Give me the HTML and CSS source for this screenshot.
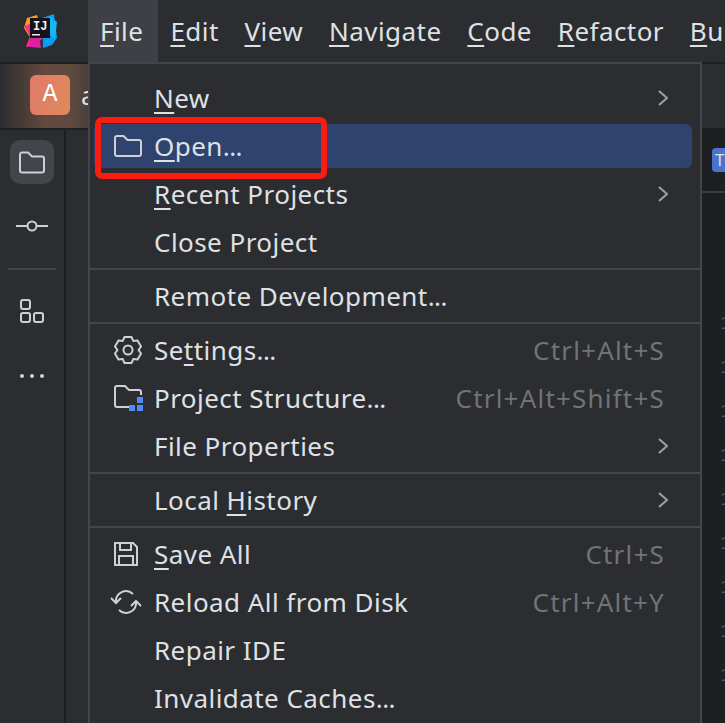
FILE: index.html
```html
<!DOCTYPE html>
<html lang="en">
<head>
<meta charset="utf-8">
<title>File menu</title>
<link rel="stylesheet" href="styles.css">
</head>
<body>
<div class="window">
  <header class="titlebar">
    <div class="logo-box">
      <svg class="logo" width="40" height="40" viewBox="0 0 40 40">
        <polygon points="6,4 16,1 19,12 8,22 3,14" fill="#ff9a1f"/>
        <polygon points="3,12 14,8 22,24 13,32 5,33 9,22" fill="#fd2b8d"/>
        <polygon points="21,4 33,0 36,24 31,31 22,34" fill="#0a9cf0"/>
        <polygon points="28,2 36,8 34,25 28,20" fill="#16b7f5"/>
        <polygon points="8,23 18,20 20,34 9,33" fill="#dd1fa0"/>
        <rect x="9" y="4" width="20" height="20" fill="#16121c"/>
        <text class="logo-text" x="12" y="16">IJ</text>
        <rect x="11" y="20" width="8" height="1.5" fill="#e8e8e8"/>
      </svg>
    </div>
    <nav class="menubar">
      <span class="menubar-item is-open"><u>F</u>ile</span>
      <span class="menubar-item"><u>E</u>dit</span>
      <span class="menubar-item"><u>V</u>iew</span>
      <span class="menubar-item"><u>N</u>avigate</span>
      <span class="menubar-item"><u>C</u>ode</span>
      <span class="menubar-item"><u>R</u>efactor</span>
      <span class="menubar-item"><u>B</u>uild</span>
    </nav>
  </header>

  <div class="toolbar">
    <span class="avatar">A</span>
    <span class="project-name">a</span>
  </div>

  <div class="workspace">
    <aside class="stripe">
      <span class="stripe-btn is-active">
        <svg width="32" height="28" viewBox="0 0 32 28" fill="none" stroke="#ced0d6" stroke-width="2"><path d="M4 6.500a2 2 0 0 1 2-2h6l4 4h10a2 2 0 0 1 2 2v12a2 2 0 0 1-2 2H6a2 2 0 0 1-2-2z"/></svg>
      </span>
      <span class="stripe-btn">
        <svg width="34" height="16" viewBox="0 0 34 16" fill="none" stroke="#ced0d6" stroke-width="2"><circle cx="17" cy="8" r="4.500"/><path d="M1 8h11M22 8h11"/></svg>
      </span>
      <span class="stripe-sep"></span>
      <span class="stripe-btn">
        <svg width="28" height="28" viewBox="0 0 28 28" fill="none" stroke="#ced0d6" stroke-width="2"><rect x="3" y="2" width="9" height="9" rx="2"/><rect x="3" y="15" width="9" height="9" rx="2"/><rect x="16" y="15" width="9" height="9" rx="2"/></svg>
      </span>
      <span class="stripe-btn">
        <svg width="28" height="6" viewBox="0 0 28 6" fill="#ced0d6"><circle cx="4" cy="3" r="2"/><circle cx="14" cy="3" r="2"/><circle cx="24" cy="3" r="2"/></svg>
      </span>
    </aside>
    <div class="side-panel"></div>
    <main class="editor">
      <div class="tabs"><span class="badge">T</span></div>
      <div class="gutter">
        <span>1</span><span>1</span><span>1</span><span>1</span><span>1</span><span>1</span><span>1</span><span>1</span><span>1</span>
      </div>
    </main>
  </div>

  <div class="menu">
    <div class="row"><span class="label"><u>N</u>ew</span><svg class="chev" width="12" height="18" viewBox="0 0 12 18"><path d="M2 2l8 7-8 7"/></svg></div>
    <div class="row is-selected">
      <svg class="icon" width="30" height="26" viewBox="0 0 30 26" fill="none" stroke="#ced0d6" stroke-width="2"><path d="M2 5a2 2 0 0 1 2-2h6.500l4 4H26a2 2 0 0 1 2 2v12a2 2 0 0 1-2 2H4a2 2 0 0 1-2-2z"/></svg>
      <span class="label"><u>O</u>pen<span class="dots">...</span></span>
    </div>
    <div class="row"><span class="label"><u>R</u>ecent Projects</span><svg class="chev" width="12" height="18" viewBox="0 0 12 18"><path d="M2 2l8 7-8 7"/></svg></div>
    <div class="row"><span class="label">Close Project</span></div>
    <div class="sep"></div>
    <div class="row"><span class="label">Remote Development<span class="dots">...</span></span></div>
    <div class="sep"></div>
    <div class="row">
      <svg class="icon" width="30" height="30" viewBox="0 0 30 30" fill="none" stroke="#ced0d6" stroke-width="2" stroke-linejoin="round"><path d="M11.500 2h7l1.750 3.900 4.300-.45 3.500 6.050-2.550 3.500 2.550 3.500-3.500 6.050-4.300-.45L18.500 28h-7l-1.750-3.900-4.300.45-3.500-6.050L4.500 15l-2.550-3.500 3.500-6.050 4.300.45z"/><circle cx="15" cy="15" r="4.500"/></svg>
      <span class="label">Se<u>t</u>tings<span class="dots">...</span></span><span class="shortcut">Ctrl+Alt+S</span>
    </div>
    <div class="row">
      <svg class="icon" width="32" height="28" viewBox="0 0 32 28"><path d="M17 23H4a2 2 0 0 1-2-2V4a2 2 0 0 1 2-2h8l4 4h10a2 2 0 0 1 2 2v3" fill="none" stroke="#ced0d6" stroke-width="2"/><rect x="24" y="13" width="6" height="6" fill="#548af7"/><rect x="16" y="21" width="6" height="6" fill="#548af7"/><rect x="24" y="21" width="6" height="6" fill="#548af7"/></svg>
      <span class="label">Project Structure<span class="dots">...</span></span><span class="shortcut">Ctrl+Alt+Shift+S</span>
    </div>
    <div class="row"><span class="label">File Properties</span><svg class="chev" width="12" height="18" viewBox="0 0 12 18"><path d="M2 2l8 7-8 7"/></svg></div>
    <div class="sep"></div>
    <div class="row"><span class="label">Local <u>H</u>istory</span><svg class="chev" width="12" height="18" viewBox="0 0 12 18"><path d="M2 2l8 7-8 7"/></svg></div>
    <div class="sep"></div>
    <div class="row">
      <svg class="icon" width="26" height="26" viewBox="0 0 26 26" fill="none" stroke="#ced0d6" stroke-width="2"><path d="M2 2h18l4 4v18H2z"/><path d="M7 2v7h11V2M6 24v-9h14v9"/></svg>
      <span class="label"><u>S</u>ave All</span><span class="shortcut">Ctrl+S</span>
    </div>
    <div class="row">
      <svg class="icon reload" width="32" height="26" viewBox="0 0 32 26" fill="none" stroke="#ced0d6" stroke-width="2"><path d="M6 13a10 10 0 0 1 17-8"/><path d="M26 13a10 10 0 0 1-17 8"/><path d="M1 9l5 5 5-5M21 17l5-5 5 5"/></svg>
      <span class="label">Reload All from Disk</span><span class="shortcut">Ctrl+Alt+Y</span>
    </div>
    <div class="row"><span class="label">Repair IDE</span></div>
    <div class="row"><span class="label">Invalidate Caches<span class="dots">...</span></span></div>
  </div>

  <div class="callout"></div>
</div>
</body>
</html>
```
FILE: styles.css
```css
* { box-sizing: border-box; }
html, body { margin: 0; padding: 0; background: #2b2d30; }
u { text-underline-offset: 4px; text-decoration-thickness: 2px; }

.window {
  position: relative;
  width: 725px;
  height: 723px;
  overflow: hidden;
  display: flex;
  flex-direction: column;
  background: #2b2d30;
  color: #dfe1e5;
  font-family: "Noto Sans", sans-serif;
  font-size: 26px;
  letter-spacing: .45px;
}

.titlebar {
  flex: none;
  height: 64px;
  display: flex;
  border-bottom: 2px solid #1e1f22;
}
.logo-box { width: 88px; flex: none; padding: 14px 0 0 21px; }
.logo-text { font: 700 12px "Liberation Mono", monospace; fill: #f2f2f2; letter-spacing: 0; }
.menubar { display: flex; white-space: nowrap; }
.menubar-item { padding: 0 13.8px 0 12px; line-height: 62px; }
.menubar-item.is-open { background: #3e4045; padding-right: 15px; }

.toolbar {
  flex: none;
  height: 66px;
  display: flex;
  align-items: center;
  padding: 0 0 2px 30px;
  gap: 11px;
  border-bottom: 2px solid #1e1f22;
  background: linear-gradient(90deg, #2b2d30 0, #64493d 45px, #5f4a3f 70px, #4b3f39 88px, #2b2d30 88px);
}
.avatar {
  width: 40px;
  height: 40px;
  border-radius: 6px;
  background: linear-gradient(100deg, #e07a68, #df8a5c);
  color: #fff;
  text-align: center;
  line-height: 40px;
  font-family: "Liberation Mono", monospace;
  font-size: 25px;
  letter-spacing: 0;
}
.project-name { color: #dfe1e5; }

.workspace { flex: 1; display: flex; min-height: 0; }
.stripe {
  width: 66px;
  flex: none;
  display: flex;
  flex-direction: column;
  align-items: center;
  padding-top: 10px;
  border-right: 2px solid #1e1f22;
}
.stripe-btn {
  width: 44px;
  height: 44px;
  display: flex;
  align-items: center;
  justify-content: center;
  border-radius: 10px;
  margin-bottom: 20px;
}
.stripe-btn.is-active { background: #43454a; }
.stripe-btn svg { flex: none; }
.stripe-sep { width: 48px; height: 2px; background: #43454a; margin: 0 0 20px; flex: none; }
.side-panel { width: 24px; flex: none; }

.editor { flex: 1; background: #1e1f22; display: flex; flex-direction: column; overflow: hidden; min-width: 0; }
.tabs {
  height: 63px;
  flex: none;
  padding: 18px 0 0 622px;
  border-bottom: 2px solid #393b40;
}
.badge {
  display: block;
  width: 24px;
  height: 24px;
  border-radius: 4px;
  background: #4a74cc;
  color: #dfe1e5;
  font-size: 17px;
  line-height: 24px;
  padding-left: 3px;
}
.gutter {
  display: flex;
  flex-direction: column;
  padding-left: 630px;
  margin-top: 109px;
  font: 20px/44px "Liberation Mono", monospace;
  letter-spacing: 0;
  color: #4b5059;
}

.menu {
  position: absolute;
  left: 88px;
  top: 62px;
  width: 614px;
  height: 680px;
  padding: 10px 8px 0 0;
  background: #2b2d30;
  border: 2px solid #43454a;
}
.row {
  position: relative;
  height: 48px;
  display: flex;
  align-items: center;
  padding: 0 28px 0 64px;
  margin-left: 4px;
  border-radius: 6px;
  white-space: nowrap;
}
.row .label { margin-left: -4px; flex: 1; }
.row.is-selected { height: 44px; margin-top: 2px; margin-bottom: 2px; background: #2e436e; }
.dots { letter-spacing: -.6px; }
.icon { position: absolute; left: 19px; top: 50%; transform: translateY(-50%); }
.icon.reload { left: 16px; }
.chev { flex: none; fill: none; stroke: #9da0a8; stroke-width: 2; margin-right: -5px; }
.shortcut { color: #6f737a; flex: none; letter-spacing: 1.2px; margin-right: -1px; }
.sep { height: 2px; background: #43454a; margin: 2px -8px 2px 0; }

.callout {
  position: absolute;
  left: 95px;
  top: 117px;
  width: 232px;
  height: 62px;
  border: 6px solid #fb1b11;
  border-radius: 7px;
}
```
